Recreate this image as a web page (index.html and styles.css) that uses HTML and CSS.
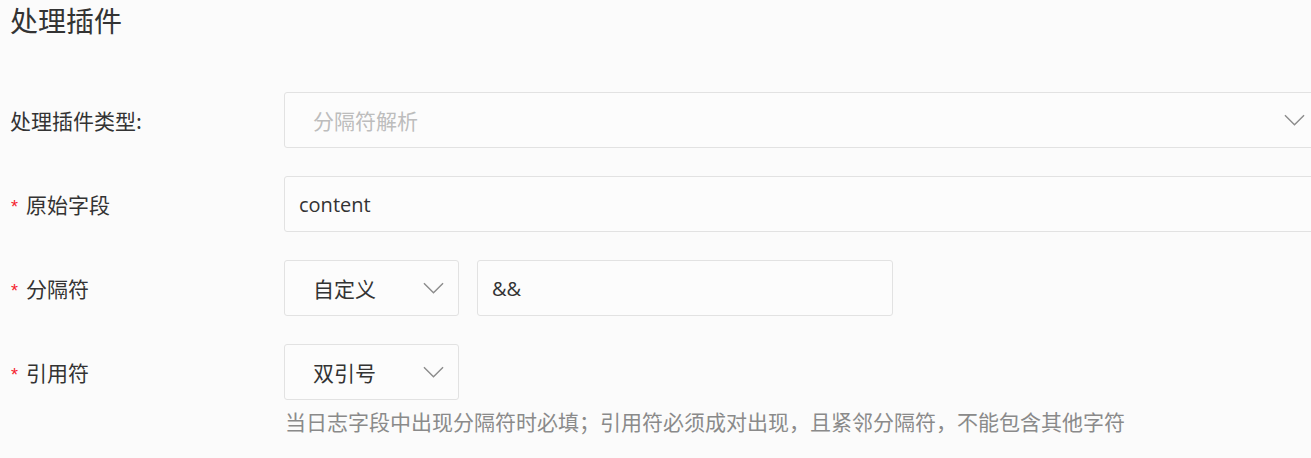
FILE: index.html
```html
<!DOCTYPE html>
<html lang="zh-CN">
<head>
    <meta charset="utf-8">
    <title>处理插件</title>
    <link rel="stylesheet" href="styles.css">
</head>
<body>
<div class="page">
    <h2 class="title">处理插件</h2>

    <div class="form">
        <div class="row">
            <label class="label">处理插件类型:</label>
            <div class="control">
                <div class="select wide disabled">
                    <span>分隔符解析</span>
                    <svg class="arrow" viewBox="0 0 22 12"><path d="M1 1 L11 11 L21 1"/></svg>
                </div>
            </div>
        </div>

        <div class="row">
            <label class="label"><i class="req">*</i>原始字段</label>
            <div class="control">
                <div class="input wide">content</div>
            </div>
        </div>

        <div class="row">
            <label class="label"><i class="req">*</i>分隔符</label>
            <div class="control">
                <div class="select">
                    <span>自定义</span>
                    <svg class="arrow" viewBox="0 0 22 12"><path d="M1 1 L11 11 L21 1"/></svg>
                </div>
                <div class="input mid">&amp;&amp;</div>
            </div>
        </div>

        <div class="row">
            <label class="label"><i class="req">*</i>引用符</label>
            <div class="control column">
                <div class="select">
                    <span>双引号</span>
                    <svg class="arrow" viewBox="0 0 22 12"><path d="M1 1 L11 11 L21 1"/></svg>
                </div>
                <p class="help">当日志字段中出现分隔符时必填；引用符必须成对出现，且紧邻分隔符，不能包含其他字符</p>
            </div>
        </div>
    </div>
</div>
</body>
</html>
```

FILE: styles.css
```css
body {
    margin: 0;
    background: #fbfbfb;
    color: #333;
    font-family: "Noto Sans CJK SC", "Open Sans", sans-serif;
}
.page {
    padding: 0 0 0 10px;
    height: 458px;
    overflow: hidden;
}
.title {
    margin: 0;
    height: 40px;
    line-height: 40px;
    font-size: 28px;
    font-weight: normal;
    color: #333;
}
.form {
    padding-top: 52px;
}
.row {
    display: flex;
    margin-bottom: 28px;
}
.label {
    width: 274px;
    height: 56px;
    line-height: 56px;
    font-size: 21px;
    color: #333;
    flex-shrink: 0;
}
.req {
    font-style: normal;
    color: #f5222d;
    font-size: 18px;
    margin: 0 8px 0 1px;
    font-family: "Liberation Sans", sans-serif;
}
.control {
    display: flex;
    gap: 18px;
    flex-shrink: 0;
}
.control.column {
    flex-direction: column;
    gap: 0;
}
.select, .input {
    box-sizing: border-box;
    height: 56px;
    border: 1px solid #e2e2e2;
    border-radius: 3px;
    background: #fcfcfc;
    font-size: 21px;
    display: flex;
    align-items: center;
    flex-shrink: 0;
}
.select {
    width: 175px;
    padding: 0 14px 0 28px;
    justify-content: space-between;
    color: #333;
}
.select.wide {
    width: 1036px;
}
.select.disabled span {
    color: #bdbdbd;
}
.input {
    padding: 0 14px;
    font-size: 20px;
    font-family: "Open Sans", sans-serif;
}
.input.wide {
    width: 1036px;
}
.input.mid {
    width: 416px;
}
.arrow {
    width: 21px;
    height: 12px;
    fill: none;
    stroke: #8c8c8c;
    stroke-width: 1.5;
}
.help {
    margin: 6px 0 0 1px;
    font-size: 21px;
    line-height: 30px;
    color: #8a8a8a;
}
```
